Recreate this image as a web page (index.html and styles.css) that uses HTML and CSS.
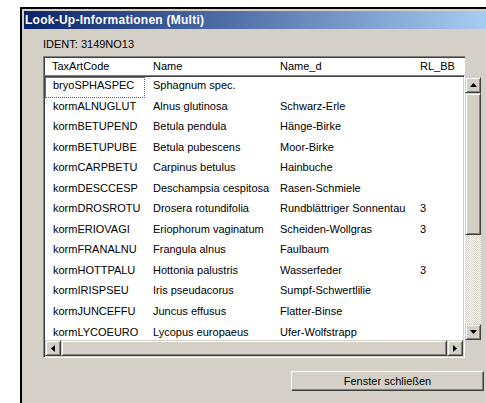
FILE: index.html
```html
<!DOCTYPE html>
<html lang="de">
<head>
<meta charset="utf-8">
<title>Look-Up-Informationen (Multi)</title>
<link rel="stylesheet" href="styles.css">
</head>
<body>
<div class="screen">
  <div class="window">
    <div class="titlebar"><span class="title">Look-Up-Informationen (Multi)</span></div>
    <div class="client">
      <div class="ident">IDENT: 3149NO13</div>

      <div class="colheader">
        <span class="c1">TaxArtCode</span>
        <span class="c2">Name</span>
        <span class="c3">Name_d</span>
        <span class="c4">RL_BB</span>
      </div>

      <div class="gridrow">
        <div class="list">
          <div class="rows">
            <div class="row"><span class="c1 focus">bryoSPHASPEC</span><span class="c2">Sphagnum spec.</span><span class="c3"></span><span class="c4"></span></div>
            <div class="row"><span class="c1">kormALNUGLUT</span><span class="c2">Alnus glutinosa</span><span class="c3">Schwarz-Erle</span><span class="c4"></span></div>
            <div class="row"><span class="c1">kormBETUPEND</span><span class="c2">Betula pendula</span><span class="c3">Hänge-Birke</span><span class="c4"></span></div>
            <div class="row"><span class="c1">kormBETUPUBE</span><span class="c2">Betula pubescens</span><span class="c3">Moor-Birke</span><span class="c4"></span></div>
            <div class="row"><span class="c1">kormCARPBETU</span><span class="c2">Carpinus betulus</span><span class="c3">Hainbuche</span><span class="c4"></span></div>
            <div class="row"><span class="c1">kormDESCCESP</span><span class="c2">Deschampsia cespitosa</span><span class="c3">Rasen-Schmiele</span><span class="c4"></span></div>
            <div class="row"><span class="c1">kormDROSROTU</span><span class="c2">Drosera rotundifolia</span><span class="c3">Rundblättriger Sonnentau</span><span class="c4">3</span></div>
            <div class="row"><span class="c1">kormERIOVAGI</span><span class="c2">Eriophorum vaginatum</span><span class="c3">Scheiden-Wollgras</span><span class="c4">3</span></div>
            <div class="row"><span class="c1">kormFRANALNU</span><span class="c2">Frangula alnus</span><span class="c3">Faulbaum</span><span class="c4"></span></div>
            <div class="row"><span class="c1">kormHOTTPALU</span><span class="c2">Hottonia palustris</span><span class="c3">Wasserfeder</span><span class="c4">3</span></div>
            <div class="row"><span class="c1">kormIRISPSEU</span><span class="c2">Iris pseudacorus</span><span class="c3">Sumpf-Schwertlilie</span><span class="c4"></span></div>
            <div class="row"><span class="c1">kormJUNCEFFU</span><span class="c2">Juncus effusus</span><span class="c3">Flatter-Binse</span><span class="c4"></span></div>
            <div class="row"><span class="c1">kormLYCOEURO</span><span class="c2">Lycopus europaeus</span><span class="c3">Ufer-Wolfstrapp</span><span class="c4"></span></div>
          </div>
          <div class="hscroll">
            <div class="sbtn"><svg width="4" height="7" viewBox="0 0 4 7"><path d="M4 0V7L0 3.5Z" fill="#000"/></svg></div>
            <div class="hthumb"></div>
            <div class="sbtn"><svg width="4" height="7" viewBox="0 0 4 7"><path d="M0 0V7L4 3.5Z" fill="#000"/></svg></div>
          </div>
        </div>

        <div class="vscroll">
          <div class="sbtn"><svg width="7" height="4" viewBox="0 0 7 4"><path d="M0 4H7L3.5 0Z" fill="#000"/></svg></div>
          <div class="vthumb"></div>
          <div class="track"></div>
          <div class="sbtn"><svg width="7" height="4" viewBox="0 0 7 4"><path d="M0 0H7L3.5 4Z" fill="#000"/></svg></div>
        </div>
      </div>

      <div class="footer">
        <button class="btn" type="button">Fenster schließen</button>
      </div>
    </div>
  </div>
</div>
</body>
</html>
```

FILE: styles.css
```css
html, body {
  margin: 0;
  padding: 0;
  background: #fff;
}

.screen {
  width: 486px;
  height: 403px;
  overflow: hidden;
  background: #fff;
  font-family: "Liberation Sans", Arial, sans-serif;
  font-size: 11px;
  color: #000;
  padding-top: 7px;
  box-sizing: border-box;
}

/* dialog frame, running past the right edge of the view */
.window {
  margin-left: 20px;
  width: 500px;
  height: 400px;
  border-left: 2px solid #000;
  border-top: 2px solid #000;
  background: #d4d0c8;
  padding: 2px 0 0 2px;
  box-sizing: border-box;
}

.titlebar {
  height: 18px;
  margin-right: 0;
  background: linear-gradient(to right, #0a246a 0%, #a6caf0 92%);
  display: flex;
  align-items: center;
  padding-left: 1px;
}

.title {
  color: #fff;
  font-weight: bold;
  font-size: 12px;
  letter-spacing: 0.25px;
  white-space: nowrap;
}

.client {
  width: 441px;
  padding-left: 19px;
}

.ident {
  padding-top: 8px;
  line-height: 14px;
  height: 14px;
}

/* column captions */
.colheader {
  margin-top: 5px;
  width: 422px;
  height: 19px;
  box-sizing: border-box;
  background: #fff;
  border-top: 1px solid #808080;
  border-left: 1px solid #808080;
  box-shadow: inset 1px 1px #404040;
  display: grid;
  grid-template-columns: 101px 127px 140px 1fr;
  line-height: 17px;
  padding-top: 1px;
}

.colheader span,
.row span {
  padding-left: 8px;
  white-space: nowrap;
  overflow: hidden;
}

.gridrow {
  display: flex;
  align-items: flex-start;
}

/* sunken list box */
.list {
  width: 422px;
  box-sizing: border-box;
  border: 1px solid;
  border-color: #808080 #fff #fff #808080;
  box-shadow: inset 1px 1px #404040, inset -1px -1px #d4d0c8;
  padding: 1px;
  background: #fff;
}

.rows {
  height: 263px;
  overflow: hidden;
}

.row {
  height: 20.55px;
  display: grid;
  grid-template-columns: 100px 127px 140px 1fr;
  line-height: 16px;
}

.row .focus {
  outline: 1px dotted #606060;
  outline-offset: -1px;
  box-shadow: inset 1px 1px #808080;
  padding-left: 8px;
}

/* scrollbars */
.sbtn {
  width: 16px;
  height: 16px;
  box-sizing: border-box;
  background: #d4d0c8;
  border: 1px solid;
  border-color: #d4d0c8 #404040 #404040 #d4d0c8;
  box-shadow: inset 1px 1px #fff, inset -1px -1px #808080;
  display: flex;
  align-items: center;
  justify-content: center;
  flex: none;
}

.hscroll {
  display: flex;
  height: 16px;
}

.hthumb {
  flex: 1;
  box-sizing: border-box;
  background: #d4d0c8;
  border: 1px solid;
  border-color: #d4d0c8 #404040 #404040 #d4d0c8;
  box-shadow: inset 1px 1px #fff, inset -1px -1px #808080;
}

.vscroll {
  margin-top: 2px;
  width: 16px;
  height: 263px;
  display: flex;
  flex-direction: column;
}

.vthumb {
  height: 142px;
  box-sizing: border-box;
  background: #d4d0c8;
  border: 1px solid;
  border-color: #d4d0c8 #404040 #404040 #d4d0c8;
  box-shadow: inset 1px 1px #fff, inset -1px -1px #808080;
}

.track {
  flex: 1;
  background-color: #d4d0c8;
  background-image: conic-gradient(#fff 25%, #d4d0c8 0 50%, #fff 0 75%, #d4d0c8 0);
  background-size: 2px 2px;
}

.footer {
  display: flex;
  justify-content: flex-end;
  margin-top: 13px;
}

.btn {
  width: 193px;
  height: 20px;
  margin: 0;
  padding: 0;
  font-family: "Liberation Sans", Arial, sans-serif;
  font-size: 11px;
  color: #000;
  background: #d4d0c8;
  border: 1px solid;
  border-color: #fff #404040 #404040 #fff;
  box-shadow: inset -1px -1px #808080;
}
```
